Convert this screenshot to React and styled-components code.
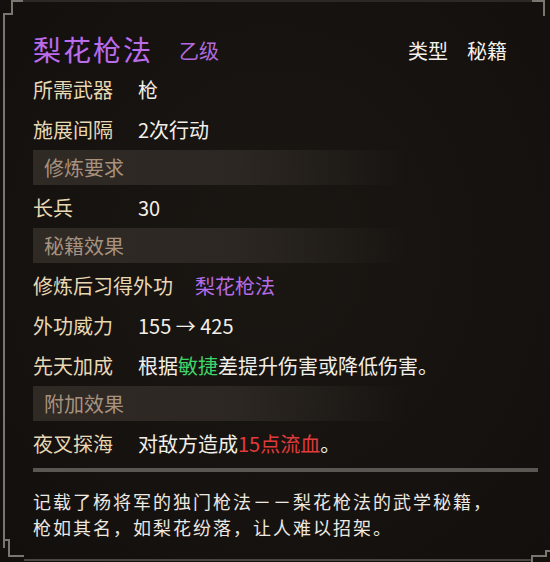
import React from 'react';
import styled, { createGlobalStyle } from 'styled-components';

const GlobalStyle = createGlobalStyle`
  html, body {
    margin: 0;
    padding: 0;
    background: #15110e;
  }
  body {
    font-family: "Noto Sans CJK SC", "Noto Sans", sans-serif;
  }
`;

const Panel = styled.div`
  position: relative;
  width: 550px;
  height: 562px;
  box-sizing: border-box;
  padding: 28px 12px 0 33px;
  background: radial-gradient(ellipse at 50% 45%, #1a1612 0%, #16120f 60%, #120f0c 100%);
  overflow: hidden;
`;

const Frame = styled.svg`
  position: absolute;
  left: 0;
  top: 0;
  pointer-events: none;
`;

const Header = styled.div`
  display: flex;
  align-items: center;
  height: 42px;
  padding-right: 31px;
`;

const Title = styled.span`
  font-size: 28px;
  line-height: 1;
  letter-spacing: 2px;
  color: #b96ee8;
  text-shadow: 0 0 2px #2a0f3a;
`;

const Grade = styled.span`
  margin-left: 26px;
  font-size: 20px;
  line-height: 1;
  color: #b06ade;
  padding-top: 4px;
`;

const Kind = styled.div`
  margin-left: auto;
  display: flex;
  gap: 19px;
  font-size: 20px;
  line-height: 1;
  color: #f4f1ec;
  padding-top: 4px;
`;

const Row = styled.div`
  display: flex;
  align-items: center;
  height: 40px;
  font-size: 20px;
  line-height: 1;
`;

const Label = styled.span`
  min-width: 83px;
  margin-right: 22px;
  color: #e8d8b4;
`;

const Value = styled.span`
  color: ${p => p.$tone || '#f2efe9'};
  white-space: nowrap;
`;

const Mark = styled.span`
  color: ${p => p.$tone};
`;

const Band = styled.div`
  display: flex;
  align-items: center;
  height: 35px;
  margin-bottom: 3px;
  padding-left: 11px;
  font-size: 20px;
  line-height: 1;
  color: #a8927f;
  background: linear-gradient(to right, #302a25 0%, #2c2723 40%, rgba(40, 35, 31, 0) 74%);
`;

const Divider = styled.div`
  height: 4px;
  margin-top: 4px;
  background: #5a5652;
`;

const Desc = styled.div`
  margin-top: 16px;
  display: flex;
  flex-direction: column;
`;

const DescLine = styled.span`
  height: 26px;
  font-size: 18px;
  line-height: 26px;
  letter-spacing: 2px;
  color: #ece8e2;
  white-space: nowrap;
`;

const PURPLE = '#b66ce6';
const GREEN = '#3fd46a';
const RED = '#e23b3b';

function BorderArt() {
  return (
    <Frame width="550" height="562" viewBox="0 0 550 562">
      <g fill="none" stroke="#7a756f" strokeWidth="2">
        <path d="M23 1 H12 V14 H4 V548" />
        <path d="M23 1 H532" stroke="#2c2825" />
        <path d="M532 1 H544 V16" />
        <path d="M4 540 H9 V556 H24" />
        <path d="M24 560 H532" stroke="#4a4642" />
        <path d="M532 562 V556 H546 V551 H550" />
      </g>
    </Frame>
  );
}

export default function App() {
  return (
    <>
      <GlobalStyle />
      <Panel>
        <BorderArt />
        <Header>
          <Title>梨花枪法</Title>
          <Grade>乙级</Grade>
          <Kind>
            <span>类型</span>
            <span>秘籍</span>
          </Kind>
        </Header>

        <Row>
          <Label>所需武器</Label>
          <Value>枪</Value>
        </Row>
        <Row>
          <Label>施展间隔</Label>
          <Value>2次行动</Value>
        </Row>

        <Band>修炼要求</Band>
        <Row>
          <Label>长兵</Label>
          <Value>30</Value>
        </Row>

        <Band>秘籍效果</Band>
        <Row>
          <Label>修炼后习得外功</Label>
          <Value $tone={PURPLE}>梨花枪法</Value>
        </Row>
        <Row>
          <Label>外功威力</Label>
          <Value>155 → 425</Value>
        </Row>
        <Row>
          <Label>先天加成</Label>
          <Value>
            根据<Mark $tone={GREEN}>敏捷</Mark>差提升伤害或降低伤害。
          </Value>
        </Row>

        <Band>附加效果</Band>
        <Row>
          <Label>夜叉探海</Label>
          <Value>
            对敌方造成<Mark $tone={RED}>15点流血</Mark>。
          </Value>
        </Row>

        <Divider />
        <Desc>
          <DescLine>记载了杨将军的独门枪法－－梨花枪法的武学秘籍，</DescLine>
          <DescLine>枪如其名，如梨花纷落，让人难以招架。</DescLine>
        </Desc>
      </Panel>
    </>
  );
}
